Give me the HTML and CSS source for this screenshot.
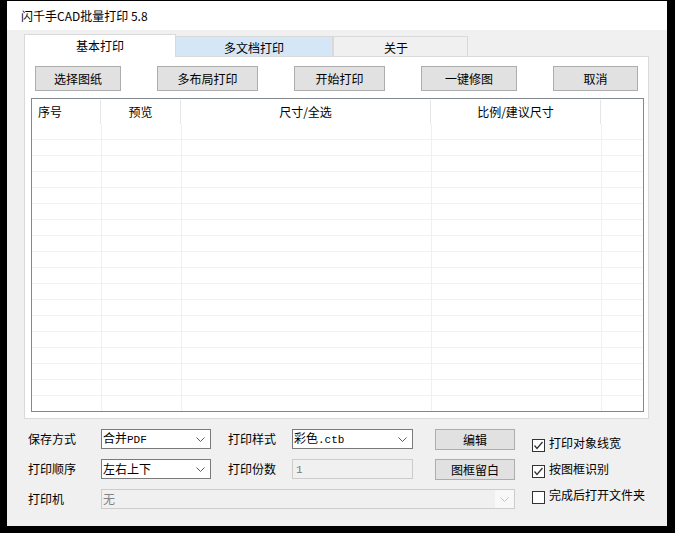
FILE: index.html
```html
<!DOCTYPE html>
<html lang="zh-CN">
<head>
<meta charset="utf-8">
<title>闪千手CAD批量打印 5.8</title>
<link rel="stylesheet" href="styles.css">
</head>
<body>
<div class="window">
  <div class="titlebar">闪千手CAD批量打印 5.8</div>
  <div class="client">
    <div class="tabs">
      <div class="tab tab-active">基本打印</div>
      <div class="tab tab-hover">多文档打印</div>
      <div class="tab tab-about">关于</div>
    </div>
    <div class="panel">
      <div class="toolbar">
        <button class="btn btn-a">选择图纸</button>
        <button class="btn btn-b">多布局打印</button>
        <button class="btn btn-c">开始打印</button>
        <button class="btn btn-d">一键修图</button>
        <button class="btn btn-e">取消</button>
      </div>
      <div class="list">
        <div class="list-head">
          <div class="hcell hcell-left">序号</div>
          <div class="hcell">预览</div>
          <div class="hcell">尺寸/全选</div>
          <div class="hcell">比例/建议尺寸</div>
          <div class="hcell hcell-last"></div>
        </div>
        <div class="list-body">
          <div class="row"><div class="c"></div><div class="c"></div><div class="c"></div><div class="c"></div><div class="c c-last"></div></div>
          <div class="row"><div class="c"></div><div class="c"></div><div class="c"></div><div class="c"></div><div class="c c-last"></div></div>
          <div class="row"><div class="c"></div><div class="c"></div><div class="c"></div><div class="c"></div><div class="c c-last"></div></div>
          <div class="row"><div class="c"></div><div class="c"></div><div class="c"></div><div class="c"></div><div class="c c-last"></div></div>
          <div class="row"><div class="c"></div><div class="c"></div><div class="c"></div><div class="c"></div><div class="c c-last"></div></div>
          <div class="row"><div class="c"></div><div class="c"></div><div class="c"></div><div class="c"></div><div class="c c-last"></div></div>
          <div class="row"><div class="c"></div><div class="c"></div><div class="c"></div><div class="c"></div><div class="c c-last"></div></div>
          <div class="row"><div class="c"></div><div class="c"></div><div class="c"></div><div class="c"></div><div class="c c-last"></div></div>
          <div class="row"><div class="c"></div><div class="c"></div><div class="c"></div><div class="c"></div><div class="c c-last"></div></div>
          <div class="row"><div class="c"></div><div class="c"></div><div class="c"></div><div class="c"></div><div class="c c-last"></div></div>
          <div class="row"><div class="c"></div><div class="c"></div><div class="c"></div><div class="c"></div><div class="c c-last"></div></div>
          <div class="row"><div class="c"></div><div class="c"></div><div class="c"></div><div class="c"></div><div class="c c-last"></div></div>
          <div class="row"><div class="c"></div><div class="c"></div><div class="c"></div><div class="c"></div><div class="c c-last"></div></div>
          <div class="row"><div class="c"></div><div class="c"></div><div class="c"></div><div class="c"></div><div class="c c-last"></div></div>
          <div class="row"><div class="c"></div><div class="c"></div><div class="c"></div><div class="c"></div><div class="c c-last"></div></div>
          <div class="row"><div class="c"></div><div class="c"></div><div class="c"></div><div class="c"></div><div class="c c-last"></div></div>
          <div class="row"><div class="c"></div><div class="c"></div><div class="c"></div><div class="c"></div><div class="c c-last"></div></div>
          <div class="row"><div class="c"></div><div class="c"></div><div class="c"></div><div class="c"></div><div class="c c-last"></div></div>
        </div>
      </div>
    </div>
    <div class="form">
      <div class="fields">
        <div class="label">保存方式</div>
        <div class="combo"><span class="combo-text">合并<span class="latin">PDF</span></span><svg class="chev" width="9" height="5" viewBox="0 0 9 5"><polyline points="0.5,0.5 4.5,4.5 8.5,0.5" fill="none" stroke="#5a5a5a" stroke-width="1"/></svg></div>
        <div class="label label-mid">打印样式</div>
        <div class="combo"><span class="combo-text">彩色<span class="latin">.ctb</span></span><svg class="chev" width="9" height="5" viewBox="0 0 9 5"><polyline points="0.5,0.5 4.5,4.5 8.5,0.5" fill="none" stroke="#5a5a5a" stroke-width="1"/></svg></div>
        <div class="btn-cell"><button class="btn btn-small">编辑</button></div>

        <div class="label">打印顺序</div>
        <div class="combo"><span class="combo-text">左右上下</span><svg class="chev" width="9" height="5" viewBox="0 0 9 5"><polyline points="0.5,0.5 4.5,4.5 8.5,0.5" fill="none" stroke="#5a5a5a" stroke-width="1"/></svg></div>
        <div class="label label-mid">打印份数</div>
        <div class="input-disabled"><span class="latin">1</span></div>
        <div class="btn-cell"><button class="btn btn-small">图框留白</button></div>

        <div class="label">打印机</div>
        <div class="combo-disabled">
          <span class="combo-text">无</span>
          <div class="combo-arrow"><svg width="9" height="5" viewBox="0 0 9 5"><polyline points="0.5,0.5 4.5,4.5 8.5,0.5" fill="none" stroke="#c4c4c4" stroke-width="1"/></svg></div>
        </div>
      </div>
      <div class="checks">
        <div class="check">
          <span class="box"><svg width="11" height="11" viewBox="0 0 11 11"><polyline points="1.5,5.5 4,8.5 9.5,2" fill="none" stroke="#333" stroke-width="1.3"/></svg></span>
          <span class="check-text">打印对象线宽</span>
        </div>
        <div class="check">
          <span class="box"><svg width="11" height="11" viewBox="0 0 11 11"><polyline points="1.5,5.5 4,8.5 9.5,2" fill="none" stroke="#333" stroke-width="1.3"/></svg></span>
          <span class="check-text">按图框识别</span>
        </div>
        <div class="check">
          <span class="box"></span>
          <span class="check-text">完成后打开文件夹</span>
        </div>
      </div>
    </div>
  </div>
</div>
</body>
</html>
```

FILE: styles.css
```css
* { box-sizing: border-box; }

html, body {
  margin: 0;
  padding: 0;
}

body {
  background: #000;
  padding: 1px 8px 0 7px;
  font-family: "Noto Sans CJK SC", "Microsoft YaHei", sans-serif;
  font-size: 12px;
  color: #000;
  width: 675px;
  height: 533px;
  overflow: hidden;
}

.window {
  width: 660px;
  height: 525px;
  display: flex;
  flex-direction: column;
  background: #f0f0f0;
}

.titlebar {
  height: 29px;
  background: #fff;
  line-height: 29px;
  padding-left: 14px;
  font-size: 12px;
  white-space: nowrap;
}

.client {
  flex: 1;
  padding: 4px 0 0 17px;
}

/* Tabs */
.tabs {
  display: flex;
  align-items: flex-end;
  height: 23px;
  margin-bottom: -1px;
  position: relative;
  z-index: 1;
}

.tab {
  height: 21px;
  line-height: 20px;
  text-align: center;
  border: 1px solid #d9d9d9;
  background: #f0f0f0;
  white-space: nowrap;
}

.tab-active {
  width: 152px;
  height: 23px;
  line-height: 21px;
  background: #fff;
  border-bottom: none;
}

.tab-hover {
  width: 157px;
  background: #d5e7f7;
  border-left: none;
  padding-top: 1px;
}

.tab-about {
  width: 135px;
  padding-right: 9px;
  padding-top: 1px;
}

/* Panel */
.panel {
  width: 625px;
  height: 363px;
  background: #fff;
  border: 1px solid #d9d9d9;
  padding: 9px 4px 6px 6px;
  display: flex;
  flex-direction: column;
}

.toolbar {
  display: flex;
  justify-content: space-between;
  padding: 0 6px 0 4px;
}

.btn {
  height: 25px;
  background: #e1e1e1;
  border: 1px solid #adadad;
  font-family: "Noto Sans CJK SC", "Microsoft YaHei", sans-serif;
  font-size: 12px;
  line-height: 16px;
  color: #000;
  padding: 0;
  margin: 0;
}

.btn-a { width: 86px; }
.btn-b { width: 101px; }
.btn-c { width: 91px; }
.btn-d { width: 96px; }
.btn-e { width: 85px; }

/* List view */
.list {
  margin-top: 7px;
  width: 613px;
  height: 314px;
  border: 1px solid #828790;
  background: #fff;
  display: flex;
  flex-direction: column;
  overflow: hidden;
}

.list-head {
  display: grid;
  grid-template-columns: 69px 80px 250px 170px 1fr;
  height: 25px;
  flex: none;
}

.hcell {
  border-right: 1px solid #e5e5e5;
  margin: 1px 0 0;
  text-align: center;
  line-height: 24px;
  white-space: nowrap;
}

.hcell-left {
  text-align: left;
  padding-left: 6px;
}

.hcell-last { border-right: none; }

.list-body {
  flex: 1;
  overflow: hidden;
  padding-right: 1px;
}

.row {
  display: grid;
  grid-template-columns: 70px 80px 250px 170px 1fr;
  height: 16px;
  border-bottom: 1px solid #f0f0f0;
}

.c { border-right: 1px solid #f0f0f0; }
.c-last { border-right: none; }

/* Form */
.form {
  display: flex;
  margin-top: 10px;
  padding-left: 4px;
}

.fields {
  display: grid;
  grid-template-columns: 73px 110px 81px 121px 102px;
  grid-auto-rows: 20px;
  row-gap: 10px;
}

.label {
  line-height: 20px;
  white-space: nowrap;
}

.label-mid { padding-left: 17px; }

.combo {
  display: flex;
  align-items: center;
  justify-content: space-between;
  background: #fff;
  border: 1px solid #7a7a7a;
  padding: 0 5px 0 1px;
}

.combo-text {
  line-height: 18px;
  white-space: nowrap;
}

.latin {
  font-family: "Liberation Mono", monospace;
  font-size: 11px;
}

.chev { display: block; }

.btn-cell {
  padding-left: 22px;
}

.btn-small {
  width: 80px;
  height: 21px;
  line-height: 17px;
}

.input-disabled {
  background: #f0f0f0;
  border: 1px solid #cccccc;
  color: #7a7a7a;
  padding-left: 3px;
  line-height: 15px;
}

.combo-disabled {
  grid-column: 2 / 6;
  display: flex;
  align-items: center;
  justify-content: space-between;
  background: #f0f0f0;
  border: 1px solid #cccccc;
  padding-left: 1px;
  color: #838383;
  height: 20px;
}

.combo-arrow {
  width: 19px;
  align-self: stretch;
  background: #f8f8f8;
  display: flex;
  align-items: center;
  justify-content: center;
}

.combo-arrow svg { display: block; }

/* Checkboxes */
.checks {
  margin-left: 17px;
  padding-top: 10px;
  display: flex;
  flex-direction: column;
  gap: 13px;
}

.check {
  display: flex;
  align-items: center;
  height: 13px;
  white-space: nowrap;
}

.box {
  width: 13px;
  height: 13px;
  border: 1px solid #333;
  background: #fff;
  display: flex;
  align-items: center;
  justify-content: center;
  flex: none;
}

.box svg { display: block; }

.check-text {
  margin-left: 4px;
  line-height: 16px;
  margin-top: -5px;
}
```
